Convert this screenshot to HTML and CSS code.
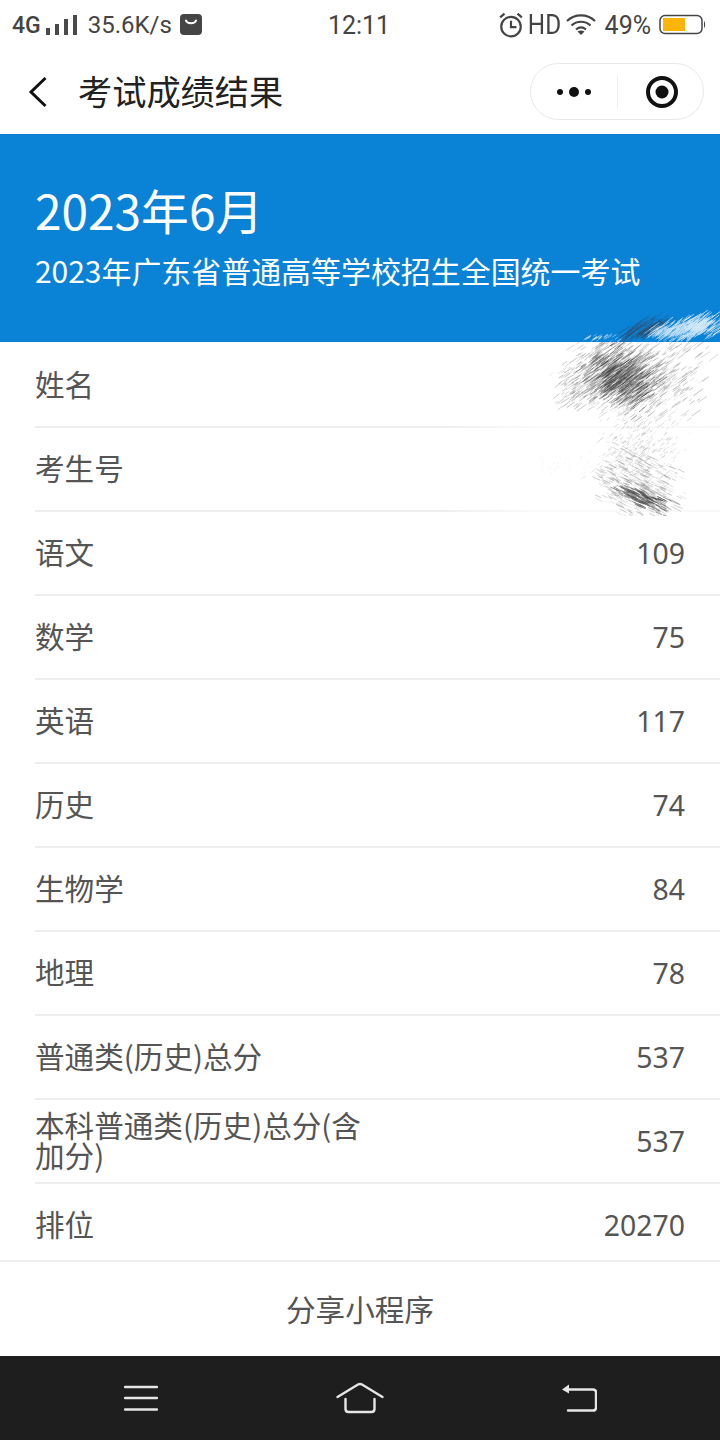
FILE: index.html
```html
<!DOCTYPE html>
<html lang="zh">
<head>
<meta charset="utf-8">
<title>考试成绩结果</title>
<link rel="stylesheet" href="styles.css">
</head>
<body>
<div class="screen">
  <div class="status">
    <div class="status-left">
      <span class="net">4G</span>
      <svg class="signal" width="32" height="22" viewBox="0 0 32 22"><g fill="#4a4a4a"><rect x="0" y="14" width="4" height="7"/><rect x="9" y="10" width="4" height="11"/><rect x="18" y="5" width="4" height="16"/><rect x="27" y="1" width="4" height="20"/></g></svg>
      <span class="speed">35.6K/s</span>
      <svg class="app" width="22" height="22" viewBox="0 0 22 22"><rect width="22" height="21" rx="4" fill="#454545"/><path d="M6 6.500c1 3.500 9 3.500 10 0" fill="none" stroke="#fff" stroke-width="2" stroke-linecap="round"/></svg>
    </div>
    <div class="status-time">12:11</div>
    <div class="status-right">
      <svg class="alarm" width="24" height="24" viewBox="0 0 24 24" fill="none" stroke="#444" stroke-width="2"><circle cx="12" cy="13.500" r="9"/><path d="M12 8v6h5M2 5l4-3.500M22 5l-4-3.500"/></svg>
      <span class="hd">HD</span>
      <svg class="wifi" width="30" height="22" viewBox="0 0 30 22" fill="none" stroke="#444" stroke-width="2.200"><path d="M1 7c8-7.500 20-7.500 28 0M5.500 11.500c5.500-5 13.500-5 19 0M10 15.500c3-2.500 7-2.500 10 0"/><path d="M15 21l-3.500-3.500c2-1.500 5-1.500 7 0z" fill="#444" stroke="none"/></svg>
      <span class="pct">49%</span>
      <svg class="batt" width="47" height="22" viewBox="0 0 47 22"><rect x="1" y="1.500" width="42" height="18" rx="5" fill="none" stroke="#444" stroke-width="1.500"/><rect x="4" y="4" width="22" height="13" fill="#fbb40a"/><path d="M45 7c1.500 1 1.500 6 0 7z" fill="#444"/></svg>
    </div>
  </div>

  <div class="nav">
    <svg class="back" width="20" height="32" viewBox="0 0 20 32"><path d="M17.500 2 3 16l14.500 14" fill="none" stroke="#111" stroke-width="3"/></svg>
    <div class="nav-title">考试成绩结果</div>
    <div class="capsule">
      <svg class="more" width="36" height="12" viewBox="0 0 36 12"><g fill="#111"><circle cx="4" cy="6" r="3"/><circle cx="18" cy="6" r="5"/><circle cx="32" cy="6" r="3"/></g></svg>
      <span class="capsule-sep"></span>
      <svg class="target" width="32" height="32" viewBox="0 0 32 32"><circle cx="16" cy="16" r="14" fill="none" stroke="#111" stroke-width="4"/><circle cx="16" cy="16" r="6.500" fill="#111"/></svg>
    </div>
  </div>

  <div class="hero">
    <div class="hero-date">2023年6月</div>
    <div class="hero-name">2023年广东省普通高等学校招生全国统一考试</div>
  </div>

  <div class="table">
    <div class="row"><span class="label">姓名</span></div>
    <div class="row"><span class="label">考生号</span></div>
    <div class="row"><span class="label">语文</span><span class="val">109</span></div>
    <div class="row"><span class="label">数学</span><span class="val">75</span></div>
    <div class="row"><span class="label">英语</span><span class="val">117</span></div>
    <div class="row"><span class="label">历史</span><span class="val">74</span></div>
    <div class="row"><span class="label">生物学</span><span class="val">84</span></div>
    <div class="row"><span class="label">地理</span><span class="val">78</span></div>
    <div class="row"><span class="label">普通类(历史)总分</span><span class="val">537</span></div>
    <div class="row"><span class="label">本科普通类(历史)总分(含加分)</span><span class="val">537</span></div>
    <div class="row row-last"><span class="label">排位</span><span class="val">20270</span></div>
  </div>

  <div class="share"><span class="share-text">分享小程序</span></div>

  <div class="sysbar">
    <svg width="34" height="26" viewBox="0 0 34 26"><path d="M1 2h32M1 13h32M1 24.500h32" stroke="#e6e6e6" stroke-width="2.400" stroke-linecap="round"/></svg>
    <svg width="48" height="32" viewBox="0 0 48 32" fill="none" stroke="#e6e6e6" stroke-width="2.400" stroke-linecap="round" stroke-linejoin="round"><path d="M1.500 15 22 2.500q2-1 4 0L46.500 15M9.500 17v10q0 3 3 3h23q3 0 3-3V17"/></svg>
    <svg width="36" height="30" viewBox="0 0 36 30" fill="none" stroke="#e6e6e6" stroke-width="2.400" stroke-linecap="round" stroke-linejoin="round"><path d="M6 6.500h26q3 0 3 3v15q0 3-3 3H7"/><path d="M1 6.500 8 1.500v9z" fill="#e6e6e6" stroke="none"/></svg>
  </div>

  <svg id="scribble" class="scribble" width="280" height="210" viewBox="440 310 280 210"></svg>
</div>
<script src="script.js"></script>
</body>
</html>
```
FILE: styles.css
```css
* { box-sizing: border-box; }
html, body { margin: 0; padding: 0; background: #fff; }
.screen {
  position: relative;
  width: 720px;
  height: 1440px;
  overflow: hidden;
  display: flex;
  flex-direction: column;
  font-family: "Noto Sans CJK SC", "Noto Sans", sans-serif;
  color: #222;
}
.status {
  height: 50px;
  display: flex;
  align-items: center;
  padding: 0 14px 0 12px;
  color: #444;
  font-family: "Roboto", "Noto Sans", sans-serif;
  font-size: 24px;
}
.status-left { flex: 1; display: flex; align-items: center; }
.net { font-size: 23px; font-weight: 500; }
.signal { margin-left: 5px; }
.speed { margin-left: 10px; }
.app { margin-left: 8px; }
.status-time { font-size: 25px; }
.status-right { flex: 1; display: flex; align-items: center; justify-content: flex-end; }
.alarm { width: 26px; height: 26px; }
.hd { font-size: 27px; margin-left: 2px; transform: scaleX(0.9); }
.wifi { margin-left: 3px; }
.pct { font-size: 25px; margin-left: 9px; }
.batt { margin-left: 8px; }
.nav {
  height: 84px;
  display: flex;
  align-items: center;
  padding: 0 16px 0 28px;
}
.back { flex: none; }
.nav-title { font-size: 34.200px; color: #222; margin: 0 0 3px 30px; flex: 1; line-height: 1; }
.capsule {
  width: 174px;
  height: 57px;
  margin-bottom: 1px;
  border: 1px solid #e8e8e8;
  border-radius: 29px;
  display: flex;
  align-items: center;
  padding-left: 25px;
}
.capsule-sep { width: 1px; height: 34px; background: #eee; margin-left: 25px; }
.target { margin-left: 28px; }
.hero {
  height: 208px;
  background: #0a82d6;
  color: #fff;
  padding: 41px 35px 0;
}
.hero-date { font-size: 47.800px; line-height: 70px; }
.hero-name { font-size: 29.950px; line-height: 50px; }
.table { padding-left: 35px; flex: none; margin-top: 2px; }
.row {
  height: 84px;
  display: flex;
  align-items: center;
  justify-content: space-between;
  border-bottom: 2px solid #eee;
  padding-right: 35px;
  font-size: 29.600px;
  color: #555;
}
.row-last { height: 78px; margin-left: -35px; padding: 6px 35px 0; }
.label { max-width: 340px; line-height: 30px; margin-bottom: 2px; }
.val { color: #555; font-family: "Noto Sans", sans-serif; font-size: 28.400px; }
.share {
  height: 94px;
  display: flex;
  align-items: center;
  justify-content: center;
  font-size: 29.600px;
  color: #555;
}
.share-text { margin-bottom: 2px; }
.sysbar {
  height: 84px;
  background: #1e1e1e;
  display: flex;
  align-items: center;
  justify-content: space-between;
  padding: 0 123px 0 124px;
}
.scribble { position: absolute; left: 440px; top: 310px; }
```
FILE: script.js
```js
// Pencil-like scribble over the hidden name / candidate number.
(function () {
  var seed = 20230611;
  function rnd() { seed = (seed * 16807) % 2147483647; return seed / 2147483647; }
  var svg = document.getElementById("scribble");
  var ns = "http://www.w3.org/2000/svg";
  var defs = document.createElementNS(ns, "defs");
  defs.innerHTML = '<filter id="soft" x="-5%" y="-5%" width="110%" height="110%"><feGaussianBlur stdDeviation="0.5"/></filter>' +
    '<linearGradient id="rub"><stop offset="0" stop-color="#fff" stop-opacity="0"/><stop offset="0.35" stop-color="#fff" stop-opacity="0.75"/><stop offset="1" stop-color="#fff" stop-opacity="0.6"/></linearGradient>' +
    '<clipPath id="band"><rect x="440" y="310" width="280" height="32"/></clipPath>' +
    '<clipPath id="sheet"><rect x="440" y="342" width="280" height="174"/></clipPath>';
  svg.appendChild(defs);

  function group(clip) {
    var g = document.createElementNS(ns, "g");
    g.setAttribute("filter", "url(#soft)");
    if (clip) g.setAttribute("clip-path", "url(#" + clip + ")");
    svg.appendChild(g);
    return g;
  }
  function rect(x, y, w, h) {
    var r = document.createElementNS(ns, "rect");
    r.setAttribute("x", x); r.setAttribute("y", y);
    r.setAttribute("width", w); r.setAttribute("height", h);
    r.setAttribute("fill", "url(#rub)");
    svg.appendChild(r);
  }
  function patch(g, o) {
    for (var i = 0; i < o.count; i++) {
      var u = rnd() + rnd() - 1, v = rnd() + rnd() - 1;
      var x = o.cx + 1.3 * (u * o.ax + v * o.bx), y = o.cy + 1.3 * (u * o.ay + v * o.by);
      var len = o.minLen + rnd() * (o.maxLen - o.minLen);
      var a = o.angle + (rnd() - 0.5) * 0.12;
      var l = document.createElementNS(ns, "line");
      l.setAttribute("x1", x.toFixed(1));
      l.setAttribute("y1", y.toFixed(1));
      l.setAttribute("x2", (x + Math.cos(a) * len).toFixed(1));
      l.setAttribute("y2", (y + Math.sin(a) * len).toFixed(1));
      l.setAttribute("stroke", o.color);
      l.setAttribute("stroke-opacity", (o.lo + rnd() * (o.hi - o.lo)).toFixed(2));
      l.setAttribute("stroke-width", o.w || 1);
      g.appendChild(l);
    }
  }

  // table rules are rubbed out near the scribble
  rect(440, 426, 280, 3);
  rect(440, 510, 280, 3);

  var up = -0.62, down = 0.45;
  var sheet = group("sheet");
  // upper block
  patch(sheet, { cx: 630, cy: 376, ax: 62, ay: 6, bx: 16, by: -34, count: 800, angle: up, color: "#777", lo: 0.1, hi: 0.45, minLen: 3, maxLen: 12 });
  patch(sheet, { cx: 584, cy: 384, ax: 22, ay: 5, bx: 12, by: -20, count: 130, angle: up, color: "#777", lo: 0.15, hi: 0.45, minLen: 3, maxLen: 10 });
  // dark core
  patch(sheet, { cx: 618, cy: 380, ax: 24, ay: 20, bx: 16, by: -18, count: 520, angle: up, color: "#444", lo: 0.15, hi: 0.6, minLen: 5, maxLen: 16 });
  // pale middle
  patch(sheet, { cx: 640, cy: 445, ax: 38, ay: 6, bx: -8, by: 38, count: 420, angle: up, color: "#888", lo: 0.08, hi: 0.35, minLen: 1, maxLen: 5 });
  patch(sheet, { cx: 565, cy: 468, ax: 30, ay: 0, bx: 0, by: 10, count: 45, angle: up, color: "#bbb", lo: 0.08, hi: 0.25, minLen: 1, maxLen: 3 });
  // lower block
  patch(sheet, { cx: 634, cy: 484, ax: 34, ay: 14, bx: 18, by: -22, count: 380, angle: down, color: "#777", lo: 0.08, hi: 0.4, minLen: 3, maxLen: 10 });
  patch(sheet, { cx: 640, cy: 497, ax: 26, ay: 10, bx: 4, by: -6, count: 150, angle: down, color: "#444", lo: 0.2, hi: 0.6, minLen: 4, maxLen: 12 });

  var band = group("band");
  // dark streak and pale streaks over the blue band
  patch(band, { cx: 638, cy: 334, ax: 20, ay: -8, bx: 5, by: 6, count: 90, angle: up, color: "#2c4f70", lo: 0.3, hi: 0.8, minLen: 6, maxLen: 18 });
  patch(band, { cx: 600, cy: 339, ax: 18, ay: 0, bx: 3, by: -3, count: 30, angle: up, color: "#dfeffa", lo: 0.3, hi: 0.7, minLen: 3, maxLen: 8 });
  patch(band, { cx: 692, cy: 330, ax: 30, ay: -6, bx: 6, by: 9, count: 300, angle: up, color: "#d8ecfa", lo: 0.3, hi: 0.85, minLen: 5, maxLen: 14 });
  patch(band, { cx: 660, cy: 336, ax: 12, ay: -2, bx: 6, by: 5, count: 60, angle: up, color: "#d8ecfa", lo: 0.2, hi: 0.6, minLen: 5, maxLen: 14 });
})();
```
